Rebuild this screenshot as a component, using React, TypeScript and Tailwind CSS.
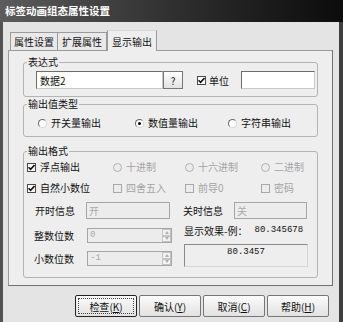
import React from "react";

const cjk = { fontFamily: '"Noto Sans CJK SC", "Liberation Sans", sans-serif' };
const mono = { fontFamily: '"Liberation Mono", "Noto Sans CJK SC", monospace' };

const Check = ({ checked, disabled }: { checked?: boolean; disabled?: boolean }) => (
  <span
    className={`flex h-[9px] w-[9px] shrink-0 items-center justify-center border ${
      disabled ? "border-[#a8a8a8] bg-[#ececec]" : "border-[#4a4a4a] bg-white"
    }`}
  >
    {checked && (
      <svg width="7" height="7" viewBox="0 0 7 7">
        <path d="M0.5 3.2 L2.6 5.4 L6.5 1" stroke="#111" strokeWidth="1.6" fill="none" />
      </svg>
    )}
  </span>
);

const Radio = ({ on, disabled }: { on?: boolean; disabled?: boolean }) => (
  <span
    className={`flex h-[9px] w-[9px] shrink-0 items-center justify-center rounded-full border ${
      disabled ? "border-[#b0b0b0] bg-[#ececec]" : "border-[#6a6a6a] border-b-[#d8d8d8] border-r-[#d8d8d8] bg-white"
    }`}
  >
    {on && <span className="h-[3px] w-[3px] rounded-full bg-black" />}
  </span>
);

const Option = ({
  w,
  children,
  kind,
  on,
  disabled,
}: {
  w: string;
  children: React.ReactNode;
  kind: "check" | "radio";
  on?: boolean;
  disabled?: boolean;
}) => (
  <div className={`flex h-[12px] items-center gap-[4px] ${w}`}>
    {kind === "check" ? <Check checked={on} disabled={disabled} /> : <Radio on={on} disabled={disabled} />}
    <span className={`leading-[12px] ${disabled ? "text-[#a4a4a4]" : "text-[#111]"}`}>{children}</span>
  </div>
);

const Spin = ({ value }: { value: string }) => (
  <div className="flex h-[15px] w-[85px] border border-[#a6a6a6] bg-[#ececec]">
    <span className="flex-1 pl-[2px] text-[9px] leading-[13px] text-[#aaa]" style={mono}>
      {value}
    </span>
    <div className="flex w-[9px] flex-col">
      {["M1 4 L3 1 L5 4 Z", "M1 1 L3 4 L5 1 Z"].map((d) => (
        <span key={d} className="flex h-[6.5px] items-center justify-center border border-[#c4c4c4] bg-[#f2f2f2]">
          <svg width="6" height="5" viewBox="0 0 6 5">
            <path d={d} fill="#b0b0b0" />
          </svg>
        </span>
      ))}
    </div>
  </div>
);

const Group = ({ title, className, children }: { title: string; className?: string; children: React.ReactNode }) => (
  <fieldset className={`w-[295px] rounded-[3px] border border-[#b4b4b4] ${className ?? ""}`}>
    <legend className="ml-[3px] px-[1px] text-[10px] leading-[12px] text-[#111]">{title}</legend>
    {children}
  </fieldset>
);

const Btn = ({ label, k, focus }: { label: string; k: string; focus?: boolean }) => (
  <button
    type="button"
    className={`flex h-[22px] w-[62px] items-center justify-center rounded-[2px] border bg-gradient-to-b from-[#fbfbfb] to-[#e2e2e2] text-[10px] text-[#111] ${
      focus ? "border-[#222] outline outline-1 outline-dotted outline-[#444] -outline-offset-4" : "border-[#767676]"
    }`}
  >
    {label}(<span className="underline">{k}</span>)
  </button>
);

export default function App() {
  return (
    <div className="flex h-[322px] w-[343px] flex-col overflow-hidden bg-[#e4e4e4]" style={cjk}>
      <div className="flex h-[22px] items-center bg-gradient-to-r from-[#5c5c5c] via-[#303030] to-[#0c0c0c] pl-[5px] text-[10.5px] font-bold text-white">
        标签动画组态属性设置
      </div>
      <div className="flex-1 border-l-[3px] border-r-[4px] border-l-[#525252] border-r-[#3e3e3e] pl-[5px] pt-[8px]">
        <div className="relative z-10 ml-[2px] flex h-[20px] items-end text-[10px] text-[#111]">
          <div className="flex h-[18px] w-[48px] items-center justify-center border border-b-0 border-[#9a9a9a] bg-[#e9e9e9]">属性设置</div>
          <div className="flex h-[18px] w-[49px] items-center justify-center border border-b-0 border-l-0 border-[#9a9a9a] bg-[#e9e9e9]">扩展属性</div>
          <div className="-mb-px flex h-[21px] w-[50px] items-center justify-center border border-b-0 border-[#9a9a9a] border-t-[#d8d8d8] bg-[#eeeeee]">
            显示输出
          </div>
        </div>
        <div className="h-[236px] w-[325px] border border-[#9a9a9a] border-r-[#707070] border-b-[#707070] bg-[#eeeeee] pl-[14px] pt-[5px] text-[10px] text-[#111]">
          <Group title="表达式" className="h-[41px]">
            <div className="flex items-center pl-[12px] pt-[3px]">
              <div className="flex h-[18px] w-[127px] items-center border border-[#6c6c6c] border-b-[#c8c8c8] border-r-[#c8c8c8] bg-white pl-[3px]">
                数据2
              </div>
              <div className="flex h-[18px] w-[20px] items-center justify-center border border-[#777] bg-gradient-to-b from-white to-[#e2e2e2]">
                ?
              </div>
              <div className="ml-[14px] flex items-center gap-[3px]">
                <Check checked />
                <span>单位</span>
              </div>
              <div className="ml-[12px] h-[18px] w-[74px] border border-[#6c6c6c] border-b-[#c8c8c8] border-r-[#c8c8c8] bg-white" />
            </div>
          </Group>

          <Group title="输出值类型" className="mt-[1px] h-[39px]">
            <div className="flex pl-[14px] pt-[7px]">
              <Option kind="radio" w="w-[97px]">开关量输出</Option>
              <Option kind="radio" on w="w-[93px]">数值量输出</Option>
              <Option kind="radio" w="w-[80px]">字符串输出</Option>
            </div>
          </Group>

          <Group title="输出格式" className="mt-[8px] h-[133px]">
            <div className="flex pl-[3px] pt-[4px]">
              <Option kind="check" on w="w-[86px]">浮点输出</Option>
              <Option kind="radio" disabled w="w-[72px]">十进制</Option>
              <Option kind="radio" disabled w="w-[76px]">十六进制</Option>
              <Option kind="radio" disabled w="w-[50px]">二进制</Option>
            </div>
            <div className="mt-[9px] flex pl-[3px]">
              <Option kind="check" on w="w-[86px]">自然小数位</Option>
              <Option kind="check" disabled w="w-[72px]">四舍五入</Option>
              <Option kind="check" disabled w="w-[76px]">前导0</Option>
              <Option kind="check" disabled w="w-[50px]">密码</Option>
            </div>
            <div className="mt-[8px] flex items-center pl-[11px]">
              <span className="w-[51px]">开时信息</span>
              <div className="h-[17px] w-[84px] border border-[#a6a6a6] bg-[#ececec] pl-[2px] leading-[15px] text-[#aaa]">开</div>
              <span className="ml-[13px] w-[51px]">关时信息</span>
              <div className="h-[17px] w-[73px] border border-[#a6a6a6] bg-[#ececec] pl-[2px] leading-[15px] text-[#aaa]">关</div>
            </div>
            <div className="mt-[6px] flex pl-[10px]">
              <div className="flex w-[150px] flex-col gap-[8px] pt-[3px]">
                <div className="flex items-center">
                  <span className="w-[53px]">整数位数</span>
                  <Spin value="0" />
                </div>
                <div className="flex items-center">
                  <span className="w-[53px]">小数位数</span>
                  <Spin value="-1" />
                </div>
              </div>
              <div className="flex flex-col">
                <div className="flex h-[12px] items-center">
                  <span className="leading-[12px]">显示效果-例：</span>
                  <span className="ml-[7px] text-[9px]" style={mono}>
                    80.345678
                  </span>
                </div>
                <div className="mt-[7px] h-[23px] w-[124px] border border-[#8a8a8a] border-b-[#d6d6d6] border-r-[#d6d6d6] pt-[1px] text-center text-[9px]" style={mono}>
                  80.3457
                </div>
              </div>
            </div>
          </Group>
        </div>
        <div className="ml-[67px] mt-[9px] flex gap-[2px]">
          <Btn label="检查" k="K" focus />
          <Btn label="确认" k="Y" />
          <Btn label="取消" k="C" />
          <Btn label="帮助" k="H" />
        </div>
      </div>
    </div>
  );
}
